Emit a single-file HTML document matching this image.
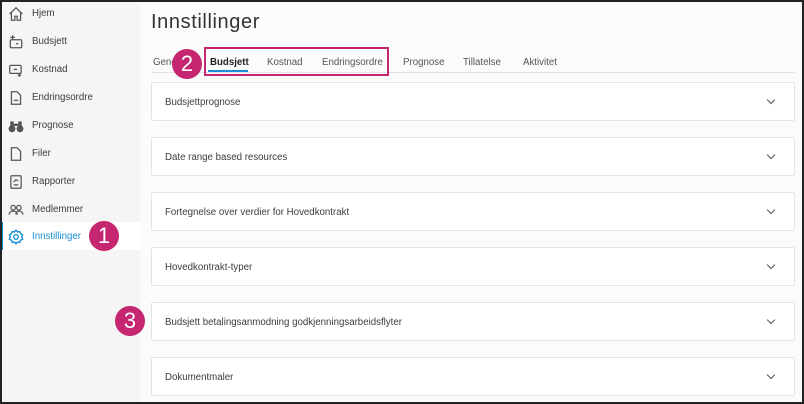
<!DOCTYPE html><html><head><style>
*{box-sizing:border-box;margin:0;padding:0}
body{width:804px;height:404px;overflow:hidden;font-family:"Liberation Sans",sans-serif;background:#fbfbfb;position:relative}
#bd{position:absolute;left:0;top:0;width:804px;height:404px;border:2px solid #222;z-index:10;pointer-events:none}
#sb{position:absolute;left:0;top:0;width:140px;height:404px;background:#f5f5f5}
.it{position:absolute;left:0;width:140px;height:28px;font-size:9.7px;color:#3c3c3c;line-height:30px;padding-left:32px}
.it svg{position:absolute;left:8px;top:7px}
.act{background:#fff;color:#1a8fd1}
.act:before{content:"";position:absolute;left:0;top:0;width:3px;height:28px;background:#1a8fd1}
h1{position:absolute;left:151px;top:11px;font-weight:normal;font-size:20px;color:#333;letter-spacing:.6px}
.tab{position:absolute;top:57px;font-size:9.7px;color:#555}
#tl{position:absolute;left:151px;top:72px;width:644px;height:1px;background:#e3e3e3}
.card{position:absolute;left:151px;width:644px;height:39px;background:#fff;border:1px solid #e4e4e4;border-radius:2px;font-size:9.7px;color:#3c3c3c;line-height:40px;padding-left:13px}
.card:after{content:"";position:absolute;right:20px;top:14px;width:5px;height:5px;border-right:1.3px solid #555;border-bottom:1.3px solid #555;transform:rotate(45deg)}
.b{position:absolute;width:30px;height:30px;border-radius:50%;background:#c4266f;color:#fff;font-size:22px;text-align:center;line-height:30px}
</style></head><body><div id="bd"></div>
<div id="sb">
<div class="it" style="top:-1px"><svg width="16" height="16" viewBox="0 0 14 14" fill="none" stroke="#555" stroke-width="1.1"><path d="M1.5 7L7 1.5 12.5 7M3 6v6.5h3V9h2v3.5h3V6"/></svg>Hjem</div>
<div class="it" style="top:27px"><svg width="16" height="16" viewBox="0 0 14 14" fill="none" stroke="#555" stroke-width="1.1"><rect x="2" y="5" width="10" height="7" rx="1"/><path d="M4 1v4M2 3h4M7 8.5h2"/></svg>Budsjett</div>
<div class="it" style="top:55px"><svg width="16" height="16" viewBox="0 0 14 14" fill="none" stroke="#555" stroke-width="1.1"><rect x="1.5" y="3" width="10" height="7" rx="1"/><path d="M5 6.5h3M10 10v3M8.5 11.5h3"/></svg>Kostnad</div>
<div class="it" style="top:83px"><svg width="16" height="16" viewBox="0 0 14 14" fill="none" stroke="#555" stroke-width="1.1"><path d="M3 1.5h5l3 3v8H3z"/><path d="M5 9h4"/></svg>Endringsordre</div>
<div class="it" style="top:111px"><svg width="16" height="16" viewBox="0 0 14 14" fill="#555"><circle cx="3.5" cy="9.5" r="3"/><circle cx="10.5" cy="9.5" r="3"/><rect x="2" y="3" width="3" height="5"/><rect x="9" y="3" width="3" height="5"/><rect x="5" y="5" width="4" height="2"/></svg>Prognose</div>
<div class="it" style="top:139px"><svg width="16" height="16" viewBox="0 0 14 14" fill="none" stroke="#555" stroke-width="1.1"><path d="M3 1.5h5l3 3v8H3z"/></svg>Filer</div>
<div class="it" style="top:167px"><svg width="16" height="16" viewBox="0 0 14 14" fill="none" stroke="#555" stroke-width="1.1"><rect x="2.5" y="1.5" width="9" height="11" rx="1"/><path d="M5 9.5h4M5 7l2-2 2 1"/></svg>Rapporter</div>
<div class="it" style="top:195px"><svg width="16" height="16" viewBox="0 0 14 14" fill="none" stroke="#555" stroke-width="1.1"><circle cx="4.5" cy="5" r="2"/><circle cx="9.5" cy="5" r="2"/><path d="M1 11c0-2 1.5-3 3.5-3s3.5 1 3.5 3M7 11c0-2 1-3 2.5-3s3.5 1 3.5 3"/></svg>Medlemmer</div>
<div class="it act" style="top:222px"><svg width="16" height="16" viewBox="0 0 14 14" fill="none" stroke="#1a8fd1" stroke-width="1.2"><circle cx="7" cy="7" r="2"/><path d="M7 1l1.3 1.6 2-.4.6 2 1.9.8-.8 2 .8 2-1.9.8-.6 2-2-.4L7 13l-1.3-1.6-2 .4-.6-2-1.9-.8.8-2-.8-2 1.9-.8.6-2 2 .4z"/></svg>Innstillinger</div>
</div>
<h1>Innstillinger</h1>
<div class="tab" style="left:153px">Gene</div>
<div class="tab" style="left:210px;color:#222;font-weight:bold">Budsjett</div>
<div style="position:absolute;left:208px;top:70px;width:40px;height:2px;background:#1a8fd1"></div>
<div class="tab" style="left:267px">Kostnad</div>
<div class="tab" style="left:322px">Endringsordre</div>
<div class="tab" style="left:403px">Prognose</div>
<div class="tab" style="left:463px">Tillatelse</div>
<div class="tab" style="left:523px">Aktivitet</div>
<div id="tl"></div>
<div style="position:absolute;left:204px;top:47px;width:185px;height:29px;border:2px solid #c4266f"></div>
<div class="card" style="top:82px">Budsjettprognose</div>
<div class="card" style="top:137px">Date range based resources</div>
<div class="card" style="top:192px">Fortegnelse over verdier for Hovedkontrakt</div>
<div class="card" style="top:247px">Hovedkontrakt-typer</div>
<div class="card" style="top:302px">Budsjett betalingsanmodning godkjenningsarbeidsflyter</div>
<div class="card" style="top:357px">Dokumentmaler</div>
<div class="b" style="left:89px;top:221px">1</div>
<div class="b" style="left:172px;top:49px">2</div>
<div class="b" style="left:115px;top:306px">3</div>
</body></html>
